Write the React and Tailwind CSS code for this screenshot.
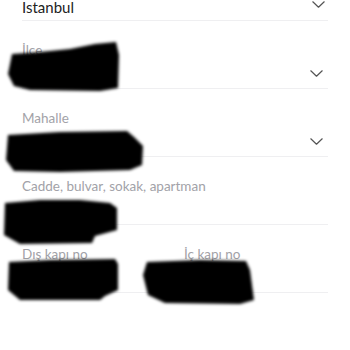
import React from "react";

function Chevron({ className = "" }) {
  return (
    <svg width="13" height="7" viewBox="0 0 13 7" className={"shrink-0 " + className}>
      <path d="M0.8 0.8 L6.5 6.2 L12.2 0.8" fill="none" stroke="#555" strokeWidth="1.2" strokeLinecap="round" strokeLinejoin="round" />
    </svg>
  );
}

function Field({ label, chevron, className = "" }) {
  return (
    <div className={"border-b border-[#efeff1] " + className}>
      <div className="pt-[22px] text-[13.5px] leading-[15px] text-[#a2a2a8]">{label}</div>
      <div className="flex h-[30px] items-center justify-end pr-[5px]">
        {chevron && <Chevron />}
      </div>
    </div>
  );
}

export default function App() {
  return (
    <div className="relative h-[350px] w-[350px] overflow-hidden bg-white" style={{ fontFamily: "Lato, 'Noto Sans', sans-serif" }}>
      <div className="px-[22px]">
        <div className="flex h-[21px] items-start justify-between border-b border-[#efeff1] pr-[3px]">
          <span className="text-[15px] leading-[15px] text-[#222]">Istanbul</span>
          <Chevron className="mt-[1px]" />
        </div>
        <Field label="İlçe" chevron />
        <Field label="Mahalle" chevron />
        <Field label="Cadde, bulvar, sokak, apartman" />
        <div className="grid grid-cols-2 gap-[18px]">
          <Field label="Dış kapı no" />
          <Field label="İç kapı no" />
        </div>
      </div>
      <svg className="pointer-events-none absolute left-0 top-0" width="350" height="350" viewBox="0 0 350 350">
        <defs>
          <filter id="b" x="-10%" y="-20%" width="120%" height="140%">
            <feGaussianBlur stdDeviation="1.8" />
          </filter>
        </defs>
        <g fill="#000" filter="url(#b)">
          <path d="M12 54 L40 52 L70 49 L95 44 L116 42 L119 55 L118 88 L100 91 L30 90 L14 86 L8 74 Z" />
          <path d="M8 135 L60 132 L127 131 L134 137 L143 146 L142 165 L130 170 L60 172 L14 171 L6 160 Z" />
          <path d="M5 203 L40 200 L80 200 L110 203 L117 208 L117 230 L95 236 L92 243 L20 244 L4 235 Z" />
          <path d="M9 262 L50 260 L115 259 L118 264 L118 290 L105 296 L100 300 L20 300 L8 290 Z" />
          <path d="M147 262 L200 260 L246 261 L250 270 L254 300 L240 304 L165 303 L148 295 L143 275 Z" />
        </g>
      </svg>
    </div>
  );
}
